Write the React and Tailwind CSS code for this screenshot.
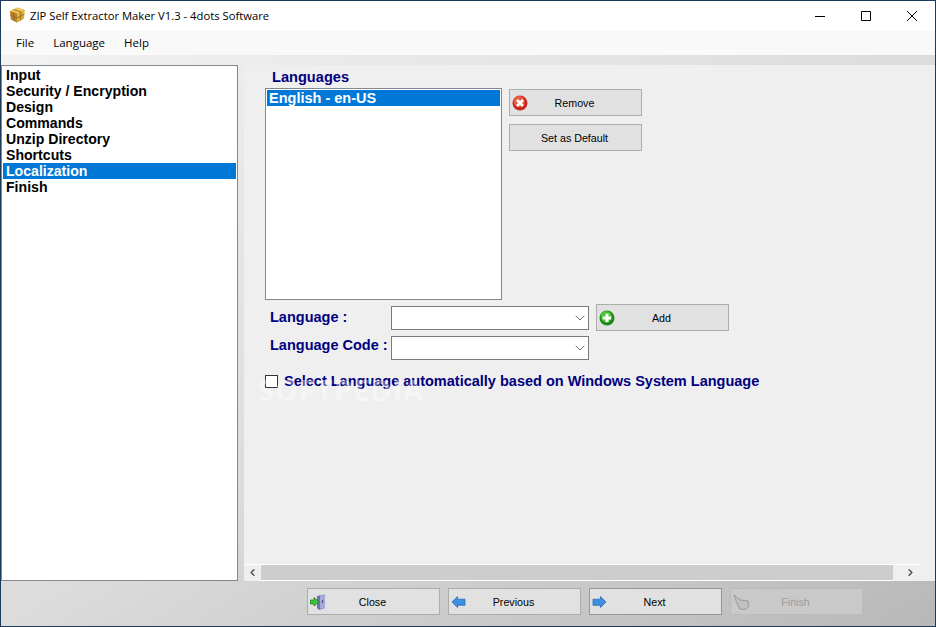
import React from 'react';
import { ChevronLeft, ChevronRight, ChevronDown } from 'lucide-react';

const sans = "font-['Liberation_Sans',Arial,sans-serif]";
const ui = "font-['Open_Sans','Noto_Sans',sans-serif]";

const steps = ['Input', 'Security / Encryption', 'Design', 'Commands', 'Unzip Directory', 'Shortcuts', 'Localization', 'Finish'];

const PackageIcon = () => (
  <svg width="16" height="16" viewBox="0 0 16 16">
    <path d="M1 4 L8.5 0.5 L15.5 3 L15 11.5 L8 15.5 L2 12.5 Z" fill="#d9a32f" />
    <path d="M1 4 L8.5 0.5 L15.5 3 L8 6.5 Z" fill="#f0c95a" />
    <path d="M8 6.5 L15.5 3 L15 11.5 L8 15.5 Z" fill="#e3af38" />
    <path d="M1 4 L8 6.5 L8 15.5 L2 12.5 Z" fill="#b9842a" />
    <path d="M4.5 2.5 L11.8 5 L11.6 13.5 M11.8 5 M4.5 5.3 L5 14" fill="none" stroke="#8f6a25" strokeWidth="0.9" />
    <path d="M1.5 8.2 L8 11 L15.2 7.2" fill="none" stroke="#8f6a25" strokeWidth="0.9" />
  </svg>
);

const RemoveIcon = () => (
  <svg width="16" height="16" viewBox="0 0 16 16">
    <circle cx="8" cy="8" r="7.5" fill="#c9281c" />
    <circle cx="7.2" cy="6.5" r="5.5" fill="#ec5a45" />
    <path d="M5 5 L11 11 M11 5 L5 11" stroke="#fff" strokeWidth="2.6" />
  </svg>
);

const AddIcon = () => (
  <svg width="16" height="16" viewBox="0 0 16 16">
    <circle cx="8" cy="8" r="7.5" fill="#1a8a1a" />
    <circle cx="7.2" cy="6.5" r="5.5" fill="#4ec436" />
    <path d="M8 3.8 V12.2 M3.8 8 H12.2" stroke="#fff" strokeWidth="3" />
  </svg>
);

const CloseIcon = () => (
  <svg width="16" height="16" viewBox="0 0 16 16">
    <path d="M7 2 L15 0.5 L15 14 L9 16 L7 14 Z" fill="#6f71ad" />
    <path d="M10 1.8 L15 0.8 V13.8 L10 15 Z" fill="#a6a8d6" />
    <path d="M12.5 6 V9" stroke="#43457a" strokeWidth="1" />
    <path d="M0.5 6 H4 V3.5 L9 8 L4 12 V10 H0.5 Z" fill="#3fc43a" stroke="#23801f" strokeWidth="0.8" />
  </svg>
);

const PrevIcon = () => (
  <svg width="15" height="13" viewBox="0 0 15 14">
    <path d="M0.5 7 L6.5 1 V4 H14.5 V10.5 H6.5 V13 Z" fill="#3d8fe0" stroke="#2768b3" strokeWidth="0.8" />
  </svg>
);

const NextIcon = () => (
  <svg width="15" height="13" viewBox="0 0 15 14">
    <path d="M14.5 7 L8.5 1 V4 H0.5 V10.5 H8.5 V13 Z" fill="#3d8fe0" stroke="#2768b3" strokeWidth="0.8" />
  </svg>
);

const FinishIcon = () => (
  <svg width="16" height="16" viewBox="0 0 16 16">
    <path d="M1 1 L7 6 L15 7 L15.5 13 L12 15.5 L7 15 L3.5 8 Z" fill="#c2c2c2" stroke="#999" strokeWidth="1" />
  </svg>
);

const ActionButton = ({ icon, label, disabled, focused, className = '' }) => (
  <button
    type="button"
    className={`relative flex h-[27px] w-[133px] items-center justify-center border pt-[1px] pr-[2px] text-[10.7px] ${sans} ${
      disabled
        ? 'border-[#bbbbbb] bg-[#c9c9c9] text-[#9c9c9c]'
        : focused
          ? 'border-[#979797] bg-[#e1e1e1] text-black'
          : 'border-[#adadad] bg-[#e1e1e1] text-black'
    } ${className}`}
  >
    {icon && <span className="absolute left-[2px] top-1/2 flex -translate-y-1/2">{icon}</span>}
    <span>{label}</span>
  </button>
);

const Dropdown = () => (
  <div className="flex h-[24px] w-[198px] items-center justify-end border border-[#7a7a7a] bg-white text-[#555]">
    <ChevronDown size={16} strokeWidth={1.3} />
  </div>
);

export default function App() {
  return (
    <div className={`relative flex h-[627px] w-[936px] flex-col overflow-hidden border border-[#1c3b5c] bg-white ${sans}`}>
      {/* Title bar */}
      <div className="flex h-[30px] shrink-0 items-center bg-white">
        <span className="ml-[8px] -mt-[2px] flex"><PackageIcon /></span>
        <span className={`ml-[5px] text-[11.25px] text-black ${ui}`}>ZIP Self Extractor Maker V1.3 - 4dots Software</span>
        <div className="ml-auto flex items-center text-black">
          <span className="flex w-[46px] justify-center">
            <svg width="10" height="10" viewBox="0 0 10 10"><path d="M0 5.5 H10" stroke="#000" strokeWidth="1" /></svg>
          </span>
          <span className="flex w-[46px] justify-center">
            <svg width="10" height="10" viewBox="0 0 10 10"><path d="M0.5 0.5 H9.5 V9.5 H0.5 Z" fill="none" stroke="#000" strokeWidth="1" /></svg>
          </span>
          <span className="flex w-[46px] justify-center">
            <svg width="10" height="10" viewBox="0 0 10 10"><path d="M0 0 L10 10 M10 0 L0 10" stroke="#000" strokeWidth="1" /></svg>
          </span>
        </div>
      </div>

      {/* Menu */}
      <div className={`flex h-[24px] shrink-0 items-center gap-[19px] bg-[#f9f9f9] pl-[15px] text-[11.5px] text-black ${ui}`}>
        <span>File</span>
        <span>Language</span>
        <span>Help</span>
      </div>

      {/* Body */}
      <div className="flex min-h-0 flex-1 flex-col bg-gradient-to-br from-[#f2f2f2] via-[#dcdcdc] to-[#b8b8b8]">
        <div className="flex min-h-0 flex-1 pt-[10px]">
          <div className="h-[516px] w-[237px] shrink-0 border border-[#828790] bg-white px-[1px] pt-[1px]">
            {steps.map((step) => (
              <div
                key={step}
                className={`h-[16px] pl-[3px] text-[14.1px] leading-[16px] font-bold ${
                  step === 'Localization' ? 'bg-[#0078d7] text-white' : 'text-black'
                }`}
              >
                {step}
              </div>
            ))}
          </div>

          <div className="ml-[6px] flex h-[516px] flex-1 flex-col bg-[#efefef]">
            <div className="flex min-h-0 flex-1 flex-col pl-[21px]">
              <div className="ml-[7px] mt-[4px] h-[16px] text-[14.6px] leading-[16px] font-bold text-[#000080]">Languages</div>
              <div className="mt-[3px] flex">
                <div className="h-[212px] w-[237px] border border-[#828790] bg-white p-[1px]">
                  <div className="h-[16px] bg-[#0078d7] pl-[2px] text-[14.5px] leading-[16px] font-bold text-white">English - en-US</div>
                </div>
                <div className="ml-[7px] flex flex-col gap-[8px] pt-[1px]">
                  <ActionButton icon={<RemoveIcon />} label="Remove" />
                  <ActionButton label="Set as Default" />
                </div>
              </div>

              <div className="mt-[4px] flex">
                <div className="flex flex-col">
                  <div className="mt-[2px] flex h-[24px] items-center">
                    <span className="w-[126px] pl-[5px] text-[14.5px] font-bold text-[#000080]">Language :</span>
                    <Dropdown />
                  </div>
                  <div className="mt-[6px] flex h-[24px] items-center">
                    <span className="w-[126px] pb-[4px] pl-[5px] text-[14.5px] font-bold whitespace-nowrap text-[#000080]">Language Code :</span>
                    <Dropdown />
                  </div>
                </div>
                <ActionButton icon={<AddIcon />} label="Add" className="ml-[7px]" />
              </div>

              <div className="mt-[11px] flex items-center">
                <span className="h-[13px] w-[13px] border border-[#333] bg-white"></span>
                <span className="ml-[6px] text-[14.5px] font-bold text-[#000080]">Select Language automatically based on Windows System Language</span>
              </div>
            </div>

            {/* Horizontal scrollbar */}
            <div className="flex h-[17px] w-[675px] shrink-0 items-stretch border-t border-white text-[#555]">
              <div className="flex w-[17px] items-center justify-center pr-[1px] pb-[1px]"><ChevronLeft size={11} strokeWidth={3.4} /></div>
              <div className="flex-1 border-b border-white bg-[#cdcdcd]"></div>
              <div className="flex w-[26px] items-center justify-end pr-[3px] pb-[1px]"><ChevronRight size={11} strokeWidth={3.4} /></div>
            </div>
          </div>
        </div>

        {/* Wizard buttons */}
        <div className="flex h-[45px] shrink-0 gap-[8px] pl-[306px] pt-[7px]">
          <ActionButton icon={<CloseIcon />} label="Close" />
          <ActionButton icon={<PrevIcon />} label="Previous" />
          <ActionButton icon={<NextIcon />} label="Next" focused />
          <ActionButton icon={<FinishIcon />} label="Finish" disabled />
        </div>
      </div>

      {/* Faint watermark over the form */}
      <div className={`pointer-events-none absolute left-[257px] top-[367px] text-[29px] font-bold tracking-[1px] text-white/40 ${ui}`}>SOFTPEDIA</div>
    </div>
  );
}
